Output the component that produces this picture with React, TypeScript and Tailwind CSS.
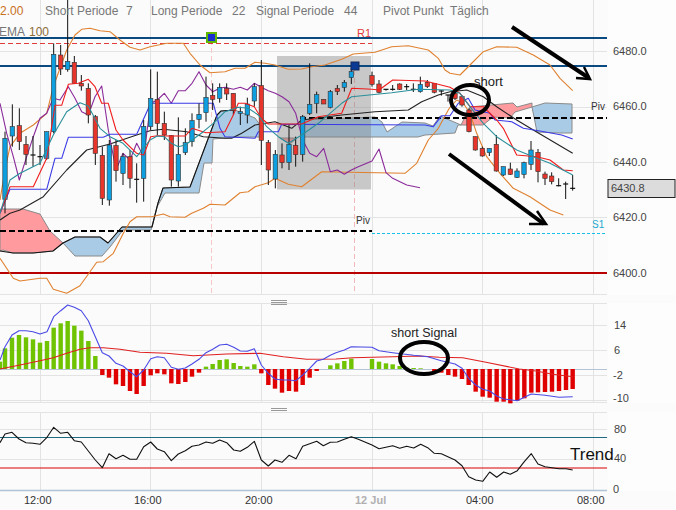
type Pt = [number, number];
type Candle = [number, number, number, number, number, "b" | "r" | "d"];

const GRID_X = [40.5, 150.5, 261.5, 372.5, 482.5, 593.5];
const FONT = "'Liberation Sans', Arial, sans-serif";

// the crops were read at 3x, so keep the numbers that way and scale them here
const z = (ox: number, oy: number, pts: number[][]): Pt[] =>
  pts.map(([x, y]) => [ox + x / 3, oy + y / 3]);
const poly = (pts: Pt[]) => pts.map((p) => p.map((n) => n.toFixed(1)).join(",")).join(" ");

const candles: Candle[] = [
  ...([
    [15, 395, 415, 598, 640, "b"], [37, 313, 380, 408, 440, "b"], [58, 325, 377, 425, 450, "r"],
    [78, 408, 433, 463, 495, "r"], [99, 408, 465, 465, 500, "d"], [120, 435, 470, 470, 495, "d"],
    [140, 395, 395, 475, 480, "b"], [161, 130, 163, 395, 400, "b"], [182, 135, 165, 207, 225, "r"],
    [203, 0, 184, 208, 215, "b"], [223, 168, 187, 250, 250, "r"], [244, 225, 250, 258, 272, "r"],
    [265, 250, 265, 345, 370, "r"], [286, 345, 350, 460, 495, "r"], [307, 440, 466, 595, 615, "r"],
    [328, 420, 435, 600, 617, "b"], [348, 420, 437, 512, 545, "r"], [369, 460, 470, 520, 555, "b"],
    [390, 450, 470, 535, 565, "r"], [410, 490, 538, 538, 608, "d"], [431, 360, 379, 535, 605, "b"],
    [452, 208, 295, 380, 390, "b"], [472, 215, 298, 370, 405, "r"], [493, 335, 370, 405, 420, "r"],
    [514, 405, 407, 540, 560, "r"], [535, 352, 463, 543, 560, "b"], [556, 385, 428, 458, 465, "b"],
    [576, 340, 362, 425, 440, "b"], [597, 310, 343, 358, 385, "b"], [618, 230, 292, 338, 365, "b"],
    [638, 250, 286, 298, 330, "r"], [659, 250, 262, 295, 308, "b"],
  ] as Candle[]).map((c): Candle => [c[0] / 3, c[1] / 3, c[2] / 3, c[3] / 3, c[4] / 3, c[5]]),
  ...([
    [5, 250, 265, 282, 300, "r"], [25, 280, 280, 332, 345, "r"], [46, 320, 335, 340, 375, "b"],
    [67, 293, 312, 345, 370, "b"], [88, 250, 260, 303, 320, "b"], [109, 180, 257, 421, 495, "r"],
    [130, 420, 428, 510, 555, "r"], [151, 450, 463, 537, 565, "b"], [171, 430, 465, 488, 505, "r"],
    [192, 375, 433, 487, 510, "b"], [212, 410, 436, 464, 500, "r"], [233, 345, 350, 463, 485, "b"],
    [254, 190, 313, 340, 345, "b"], [275, 275, 284, 310, 340, "b"], [296, 298, 298, 312, 312, "r"],
    [316, 270, 275, 322, 325, "b"], [337, 255, 265, 275, 285, "r"], [358, 240, 247, 262, 275, "b"],
    [379, 205, 215, 233, 252, "b"], [441, 215, 227, 253, 260, "r"], [462, 240, 252, 277, 280, "r"],
    [483, 268, 268, 268, 272, "d"], [503, 255, 268, 268, 272, "d"], [524, 250, 252, 268, 270, "r"],
    [545, 252, 260, 260, 270, "d"], [565, 250, 268, 268, 276, "d"], [586, 230, 253, 275, 278, "b"],
    [607, 240, 247, 260, 264, "r"], [628, 250, 250, 277, 280, "r"], [649, 270, 273, 273, 287, "d"],
    [669, 285, 285, 285, 305, "d"],
  ] as Candle[]).map((c): Candle => [225 + c[0] / 3, c[1] / 3, c[2] / 3, c[3] / 3, c[4] / 3, c[5]]),
  ...([
    [15, 270, 280, 296, 300, "r"], [36, 285, 290, 315, 320, "r"], [57, 325, 330, 395, 397, "r"],
    [76, 410, 410, 450, 452, "r"], [97, 440, 445, 468, 470, "r"], [118, 445, 445, 458, 468, "b"],
    [139, 405, 433, 513, 515, "r"], [160, 500, 500, 525, 528, "b"], [181, 488, 507, 523, 525, "r"],
    [201, 505, 513, 532, 534, "b"], [222, 485, 488, 523, 535, "b"], [243, 423, 450, 493, 510, "b"],
    [264, 447, 457, 515, 547, "r"], [285, 515, 522, 535, 555, "r"], [305, 517, 528, 545, 553, "r"],
    [326, 535, 557, 557, 559, "d"], [347, 545, 552, 552, 597, "d"], [368, 525, 565, 565, 572, "d"],
  ] as Candle[]).map((c): Candle => [450 + c[0] / 3, c[1] / 3, c[2] / 3, c[3] / 3, c[4] / 3, c[5]]),
];

const orange = [
  z(0, 0, [[0, 600], [15, 510], [30, 440], [60, 400], [100, 375], [140, 340], [160, 260], [200, 150], [225, 105], [245, 88], [270, 85], [300, 92], [330, 95], [360, 120], [390, 142], [420, 150], [450, 140], [500, 130], [550, 130], [570, 160], [600, 195], [630, 218], [675, 215]]).concat(
    z(225, 0, [[30, 205], [60, 205], [90, 187], [120, 190], [150, 195], [190, 208], [230, 207], [260, 200], [300, 195], [350, 178], [385, 162], [450, 157], [500, 140], [550, 137], [610, 150], [640, 175], [660, 210], [675, 220]]),
    z(450, 0, [[30, 225], [60, 195], [100, 155], [140, 140], [200, 142], [250, 165], [300, 195], [330, 235], [368, 272]]),
  ),
  z(0, 190, [[0, 205], [40, 265], [60, 273], [120, 265], [140, 265], [160, 298], [200, 310], [240, 287], [270, 245], [290, 217], [310, 215], [340, 190], [370, 130], [390, 95], [410, 80], [455, 80], [490, 72], [510, 80], [555, 82], [575, 70], [610, 55], [630, 43], [675, 45]]).concat(
    z(225, 0, [[45, 578], [70, 575], [90, 560], [130, 548], [150, 535], [190, 553], [230, 560], [290, 515], [540, 520], [575, 490], [610, 420], [640, 385], [670, 330], [675, 322]]),
  ),
  z(450, 0, [[0, 322], [20, 300], [40, 310], [60, 340], [80, 400], [110, 470], [150, 520], [190, 565], [240, 590], [300, 630], [340, 645]]),
];
const purple = z(0, 0, [[0, 310], [20, 400], [40, 470], [58, 540], [80, 470], [100, 410], [120, 355], [140, 340], [160, 295], [180, 300], [205, 260], [225, 295], [245, 335], [265, 345], [285, 290], [305, 258], [325, 390], [348, 510], [369, 460], [390, 480], [410, 430], [431, 470], [452, 310], [472, 300], [493, 280], [514, 310], [535, 272], [556, 272], [576, 250], [597, 215], [618, 255], [638, 275], [659, 265], [675, 262]]).concat(
  z(225, 0, [[25, 268], [46, 262], [67, 270], [88, 250], [109, 262], [130, 272], [151, 280], [171, 290], [192, 305], [212, 340], [233, 420], [254, 460], [275, 470], [296, 445], [316, 515], [337, 510], [358, 523], [379, 510], [400, 500], [441, 483], [462, 447], [483, 518], [503, 535], [545, 555], [585, 563]]),
);
const blue = z(0, 0, [[0, 640], [30, 568], [140, 568], [165, 475], [185, 475], [205, 412], [310, 412], [330, 403], [410, 403], [452, 310], [640, 310], [660, 385], [675, 410]]).concat(
  z(225, 0, [[90, 415], [100, 395], [160, 395], [170, 373], [600, 375], [625, 380], [650, 347], [675, 347]]),
  z(450, 0, [[25, 310], [55, 295], [75, 330], [120, 340], [135, 360], [185, 365], [220, 385], [270, 393], [335, 405], [368, 417]]),
);
const red = z(0, 0, [[0, 640], [30, 560], [100, 560], [140, 475], [165, 316], [185, 316], [205, 253], [235, 250], [265, 238], [285, 260], [305, 310], [325, 310], [348, 390], [369, 420], [410, 460], [431, 465], [452, 410], [472, 407], [514, 408], [556, 408], [576, 385], [618, 398], [675, 395]]).concat(
  z(225, 0, [[25, 345], [40, 310], [60, 310], [88, 320], [109, 355], [130, 372], [230, 372], [280, 350], [350, 340], [380, 265], [441, 268], [462, 270], [503, 240], [600, 243], [675, 262]]),
  z(450, 0, [[30, 280], [60, 320], [100, 320], [140, 360], [160, 385], [200, 465], [260, 470], [300, 480], [340, 510], [368, 512]]),
);
const teal = z(0, 0, [[0, 640], [30, 540], [60, 520], [120, 490], [160, 405], [200, 335], [240, 308], [265, 318], [300, 385], [330, 410], [369, 430], [410, 470], [450, 420], [472, 408], [493, 410], [514, 430], [535, 440], [556, 435], [610, 395], [640, 370], [675, 335]]).concat(
  z(225, 0, [[40, 322], [70, 325], [100, 345], [125, 380], [160, 410], [190, 430], [230, 405], [280, 370], [350, 310], [380, 290], [500, 278], [580, 268], [675, 270]]),
  z(450, 0, [[30, 280], [60, 320], [100, 370], [140, 410], [200, 450], [250, 470], [300, 490], [368, 525]]),
);
const black = z(0, 0, [[0, 660], [30, 640], [60, 630], [130, 590], [200, 510], [260, 450], [330, 432], [410, 405], [450, 392], [490, 388], [560, 395], [610, 410], [675, 415]]).concat(
  z(225, 0, [[20, 415], [50, 400], [90, 375], [150, 365], [200, 385], [230, 360], [350, 345], [450, 335], [550, 330], [590, 305], [640, 285], [675, 275]]),
  z(450, 0, [[50, 270], [100, 290], [140, 320], [200, 360], [250, 390], [368, 460]]),
);
const cloudEdge: Pt[] = [[0, 251], [13, 253], [33, 253], [53, 251], [63, 243], [75, 237], [100, 237], [108, 243], [122, 227], [152, 227], [158, 203], [163, 188], [190, 187], [217, 115], [221, 111], [235, 110]];

const redClouds: Pt[][] = [
  [[0, 209], [23, 209], [40, 214], [50, 231], [63, 243], [53, 251], [33, 253], [13, 253], [3, 250], [0, 251]],
  [[280, 138], [297, 138], [290, 144]],
  [[461, 125], [470, 107], [513, 103], [517, 107], [532, 103], [532, 107], [515, 112], [510, 118], [493, 117], [483, 125]],
];
const blueClouds: Pt[][] = [
  [[63, 243], [75, 237], [100, 237], [108, 243], [122, 227], [152, 227], [158, 203], [163, 188], [190, 187], [217, 115], [221, 111], [235, 110], [255, 118], [260, 125], [262, 137], [235, 137], [225, 138], [213, 139], [212, 163], [204, 163], [199, 193], [165, 193], [157, 207], [151, 230], [123, 230], [110, 247], [102, 256], [75, 256]],
  [[302, 120], [375, 117], [382, 122], [387, 132], [402, 122], [425, 123], [433, 126], [440, 116], [461, 125], [458, 125], [455, 133], [425, 135], [418, 137], [302, 137]],
  [[532, 107], [545, 103], [572, 104], [572, 133], [560, 133], [537, 132]],
];

const histGreenRed: [number, number][] = [
  ...[[0, 215], [15, 175], [36, 143], [57, 135], [78, 142], [99, 148], [120, 158], [141, 153], [161, 113], [182, 100], [203, 93], [223, 107], [244, 122], [265, 153], [286, 198], [307, 255], [327, 263], [348, 283], [369, 288], [390, 303], [410, 312], [431, 288], [452, 256], [472, 250], [493, 253], [514, 280], [535, 282], [556, 276], [576, 260], [597, 248], [618, 230], [638, 222], [659, 210], [680, 208], [701, 219], [721, 228], [742, 230], [763, 223], [784, 250], [805, 285], [825, 296], [846, 308], [867, 303], [888, 305], [908, 285], [929, 263], [950, 243], [991, 226]].map(([x, y]): [number, number] => [x / 3, 290 + y / 3]),
  ...[[4, 220], [25, 213], [46, 206], [108, 207], [129, 215], [150, 220], [170, 223], [191, 228], [212, 233], [233, 234], [254, 235], [295, 243], [316, 248], [337, 255], [357, 260], [378, 267], [398, 285], [419, 305], [440, 320], [461, 323], [482, 335], [503, 335], [523, 340], [544, 332], [565, 325], [586, 308], [606, 307], [627, 306], [648, 305], [669, 303], [690, 300], [710, 297]].map(([x, y]): [number, number] => [336 + x / 3, 290 + y / 3]),
];

const macdBlue = z(0, 290, [[0, 210], [15, 170], [36, 135], [57, 122], [78, 122], [99, 125], [120, 132], [141, 125], [161, 80], [182, 62], [203, 45], [223, 52], [244, 62], [265, 92], [286, 140], [307, 188], [327, 198], [348, 220], [369, 228], [390, 245], [410, 260], [431, 240], [452, 206], [472, 200], [493, 203], [514, 232], [535, 238], [556, 234], [576, 222], [597, 208], [618, 188], [638, 178], [659, 165], [680, 163], [701, 172], [721, 183], [742, 184], [763, 176], [784, 225], [805, 250], [825, 267], [846, 270], [867, 270], [888, 272], [908, 255], [929, 235], [950, 213], [970, 208], [991, 196], [1008, 188]]).concat(
  z(336, 290, [[25, 180], [46, 170], [108, 172], [129, 182], [170, 188], [233, 196], [275, 200], [316, 212], [357, 222], [378, 235], [398, 265], [419, 285], [440, 298], [461, 303], [482, 318], [503, 327], [544, 332], [565, 322], [586, 312], [627, 316], [669, 322], [710, 320]]),
);
const macdRed = z(0, 290, [[0, 237], [60, 225], [120, 212], [160, 203], [200, 190], [240, 178], [270, 173], [310, 173], [360, 178], [420, 187], [500, 190], [580, 197], [680, 192], [780, 190], [850, 200], [920, 208], [1008, 207]]).concat(
  z(336, 290, [[50, 203], [170, 200], [250, 198], [310, 202], [380, 203], [450, 217], [550, 237], [600, 243], [650, 253], [710, 260]]),
);
const trend = z(0, 290, [[0, 458], [15, 432], [36, 427], [57, 447], [78, 458], [99, 460], [120, 463], [141, 442], [161, 412], [182, 430], [203, 427], [223, 452], [244, 456], [265, 483], [286, 510], [307, 533], [327, 491], [348, 506], [369, 496], [390, 508], [410, 508], [431, 470], [452, 456], [472, 477], [493, 485], [514, 512], [535, 492], [556, 482], [576, 469], [597, 465], [618, 456], [638, 460], [659, 450], [680, 458], [701, 480], [721, 484], [742, 472], [763, 454], [784, 510], [805, 528], [825, 510], [846, 517], [867, 496], [888, 506], [908, 469], [929, 461], [950, 454], [970, 467], [991, 457], [1012, 456]]).concat(
  z(336, 290, [[25, 448], [46, 440], [67, 448], [108, 465], [129, 476], [170, 467], [191, 475], [212, 469], [233, 474], [254, 463], [275, 473], [295, 490], [316, 491], [357, 510], [378, 527], [398, 560], [419, 570], [440, 574], [461, 546], [482, 562], [503, 546], [523, 553], [544, 542], [565, 515], [586, 491], [606, 522], [627, 530], [648, 533], [669, 536], [690, 536], [710, 540]]),
);

function Line({ pts, color, w = 1.1 }: { pts: Pt[]; color: string; w?: number }) {
  return <polyline points={poly(pts)} fill="none" stroke={color} strokeWidth={w} strokeLinejoin="round" />;
}

function Label({ x, y, children, color = "#444", size = 11, bold }: { x: number; y: number; children: string; color?: string; size?: number; bold?: boolean }) {
  return (
    <text x={x} y={y} fill={color} fontSize={size} fontFamily={FONT} fontWeight={bold ? 700 : 400}>
      {children}
    </text>
  );
}

function Grid({ y1, y2, rows }: { y1: number; y2: number; rows: number[] }) {
  return (
    <g stroke="#e3e3e3" strokeWidth="1">
      {GRID_X.map((x) => <line key={x} x1={x} x2={x} y1={y1} y2={y2} />)}
      {rows.map((y) => <line key={y} x1={0} x2={607} y1={y} y2={y} />)}
    </g>
  );
}

function Handle({ y }: { y: number }) {
  return (
    <div className="flex flex-col gap-px w-[16px] ml-[271px]" style={{ marginTop: y }}>
      <div className="h-px bg-[#999]" />
      <div className="h-px bg-[#999]" />
      <div className="h-px bg-[#999]" />
    </div>
  );
}

function MainPane() {
  return (
    <svg width="676" height="295" viewBox="0 0 676 295" className="block shrink-0">
      <rect x="608" y="0" width="68" height="295" fill="#fdfdfd" />
      <Grid y1={0} y2={294} rows={[51.5, 107.5, 162.5, 217.5, 273.5, 294.5]} />
      <line x1={211.5} x2={211.5} y1={40} y2={294} stroke="#f6c8c8" strokeDasharray="5 3" />
      <line x1={354.5} x2={354.5} y1={70} y2={294} stroke="#f0b8b8" strokeDasharray="5 3" />

      {redClouds.map((c, i) => <polygon key={i} points={poly(c)} fill="#ff9a9e" stroke="#8a8a8a" strokeWidth="1" />)}
      {blueClouds.map((c, i) => <polygon key={i} points={poly(c)} fill="#a9cbe6" stroke="#8a8a8a" strokeWidth="1" />)}
      <Line pts={cloudEdge} color="#111" />
      <rect x="277" y="56" width="94" height="133.5" fill="#808080" opacity="0.42" />

      <line x1={0} x2={607} y1={38} y2={38} stroke="#0a4a80" strokeWidth="2" />
      <line x1={0} x2={607} y1={66} y2={66} stroke="#0a4a80" strokeWidth="2" />
      <line x1={0} x2={372} y1={43.5} y2={43.5} stroke="#e23b3b" strokeWidth="1" strokeDasharray="5 3" />
      <line x1={0} x2={372} y1={231} y2={231} stroke="#000" strokeWidth="2" strokeDasharray="6 3" />
      <line x1={372} x2={607} y1={233.5} y2={233.5} stroke="#18c0e8" strokeWidth="1" strokeDasharray="3 2" />
      <line x1={300} x2={607} y1={118} y2={118} stroke="#000" strokeWidth="2" strokeDasharray="6 3" />
      <line x1={0} x2={607} y1={273} y2={273} stroke="#b80000" strokeWidth="2" />

      <Line pts={black} color="#222" />
      <Line pts={orange[0]} color="#e0812f" />
      <Line pts={orange[1]} color="#e0812f" />
      <Line pts={orange[2]} color="#e0812f" />
      <Line pts={purple} color="#8a2a9a" />
      <Line pts={blue} color="#3a3ae6" />

      {candles.map(([x, hi, top, bot, lo, k], i) => (
        <g key={i}>
          <line x1={x} x2={x} y1={hi} y2={lo} stroke="#111" strokeWidth="1" />
          {k === "d" ? (
            <line x1={x - 2.5} x2={x + 2.5} y1={top} y2={top} stroke="#111" strokeWidth="1.2" />
          ) : (
            <rect x={x - 2.2} y={top} width={4.4} height={bot - top} fill={k === "b" ? "#0d9fe0" : "#e8352b"} stroke="#333" strokeWidth="0.6" />
          )}
        </g>
      ))}

      <Line pts={red} color="#f01c1c" />
      <Line pts={teal} color="#2a8f9a" />

      <rect x="207" y="33" width="9" height="9" fill="#1a2fd0" stroke="#62b800" strokeWidth="2" />
      <rect x="351" y="62" width="8" height="8" fill="#0a3a94" stroke="#14285a" strokeWidth="1" />

      <g fill="none" stroke="#000" strokeWidth="4">
        <path d="M512 27 L589 78" />
        <path d="M576 78 L590 79 L584 67" strokeWidth="2.5" />
        <path d="M449 154 L544 224" />
        <path d="M529 224 L546 224 L537 211" strokeWidth="2.5" />
        <ellipse cx="470" cy="100" rx="19" ry="15" />
      </g>

      <Label x={0} y={15} color="#c8701c" size={12}>2.00</Label>
      <Label x={45} y={15} color="#777" size={12}>Short Periode</Label>
      <Label x={126} y={15} color="#777" size={12}>7</Label>
      <Label x={151} y={15} color="#777" size={12}>Long Periode</Label>
      <Label x={232} y={15} color="#777" size={12}>22</Label>
      <Label x={256} y={15} color="#777" size={12}>Signal Periode</Label>
      <Label x={344} y={15} color="#777" size={12}>44</Label>
      <Label x={383} y={15} color="#777" size={12}>Pivot Punkt</Label>
      <Label x={450} y={15} color="#777" size={12}>Täglich</Label>
      <Label x={-1} y={36} color="#777" size={12}>EMA</Label>
      <Label x={29} y={36} color="#8c6d3a" size={12}>100</Label>

      <Label x={357} y={37} color="#e23b3b" size={11}>R1</Label>
      <Label x={474} y={86} color="#222" size={13}>short</Label>
      <Label x={356} y={224} color="#333" size={10}>Piv</Label>
      <Label x={591} y={110} color="#333" size={10}>Piv</Label>
      <Label x={592} y={228} color="#1aa8d0" size={10}>S1</Label>

      <Label x={613} y={55} size={11}>6480.0</Label>
      <Label x={613} y={110} size={11}>6460.0</Label>
      <Label x={613} y={166} size={11}>6440.0</Label>
      <Label x={613} y={221} size={11}>6420.0</Label>
      <Label x={613} y={277} size={11}>6400.0</Label>
      <rect x="608" y="179.5" width="67" height="18" fill="#dcdcdc" stroke="#222" />
      <Label x={611} y={192} size={11}>6430.8</Label>
    </svg>
  );
}

function MacdPane() {
  return (
    <svg width="676" height="100" viewBox="0 303 676 100" className="block shrink-0 overflow-visible">
      <rect x="608" y="303" width="68" height="100" fill="#fdfdfd" />
      <Grid y1={304} y2={403} rows={[303.5, 325.5, 350.5, 375.5, 400.5, 402.5]} />
      <line x1={0} x2={607} y1={369.5} y2={369.5} stroke="#b4c4d4" />
      {histGreenRed.map(([x, y], i) => (
        <rect key={i} x={x - 2.2} y={Math.min(y, 369)} width={4.4} height={Math.abs(y - 369)} fill={y < 369 ? "#6fc300" : "#e00000"} />
      ))}
      <Line pts={macdRed} color="#e02020" />
      <Line pts={macdBlue} color="#4a4ae6" />
      <ellipse cx="424" cy="358" rx="24" ry="16" fill="none" stroke="#000" strokeWidth="4" />
      <Label x={391} y={337} color="#222" size={12.5}>short Signal</Label>
      <Label x={614} y={329}>14</Label>
      <Label x={614} y={354}>6</Label>
      <Label x={613} y={379}>-2</Label>
      <Label x={613} y={402}>-10</Label>
    </svg>
  );
}

function TrendPane() {
  return (
    <svg width="676" height="79" viewBox="0 412 676 79" className="block shrink-0 overflow-visible">
      <rect x="608" y="412" width="68" height="79" fill="#fdfdfd" />
      <Grid y1={413} y2={490} rows={[412.5, 429.5, 459.5]} />
      <line x1={0} x2={607} y1={437.5} y2={437.5} stroke="#1f6a80" />
      <line x1={0} x2={607} y1={468} y2={468} stroke="#d80000" />
      <line x1={0} x2={607} y1={490.5} y2={490.5} stroke="#b0c4d8" strokeWidth="1.5" />
      <Line pts={trend} color="#111" />
      <Label x={570} y={460} color="#111" size={17}>Trend</Label>
      <Label x={614} y={433}>80</Label>
      <Label x={614} y={462}>40</Label>
      <Label x={613} y={493}>0</Label>
    </svg>
  );
}

export default function App() {
  return (
    <div className="flex h-[510px] w-[676px] flex-col overflow-hidden bg-[#fbfbfb]">
      <MainPane />
      <div className="h-[8px] shrink-0">
        <Handle y={5} />
      </div>
      <MacdPane />
      <div className="h-[9px] shrink-0">
        <Handle y={5} />
      </div>
      <TrendPane />
      <div className="relative flex-1 font-['Liberation_Sans',Arial,sans-serif] text-[11px] leading-none text-[#333]">
        <div className="flex h-full items-center">
          <span className="ml-[24px] w-[110px]">12:00</span>
          <span className="w-[111px]">16:00</span>
          <span className="w-[110px]">20:00</span>
          <span className="w-[111px] font-bold text-[#b0b0b0]">12 Jul</span>
          <span className="w-[111px]">04:00</span>
          <span>08:00</span>
        </div>
      </div>
    </div>
  );
}
